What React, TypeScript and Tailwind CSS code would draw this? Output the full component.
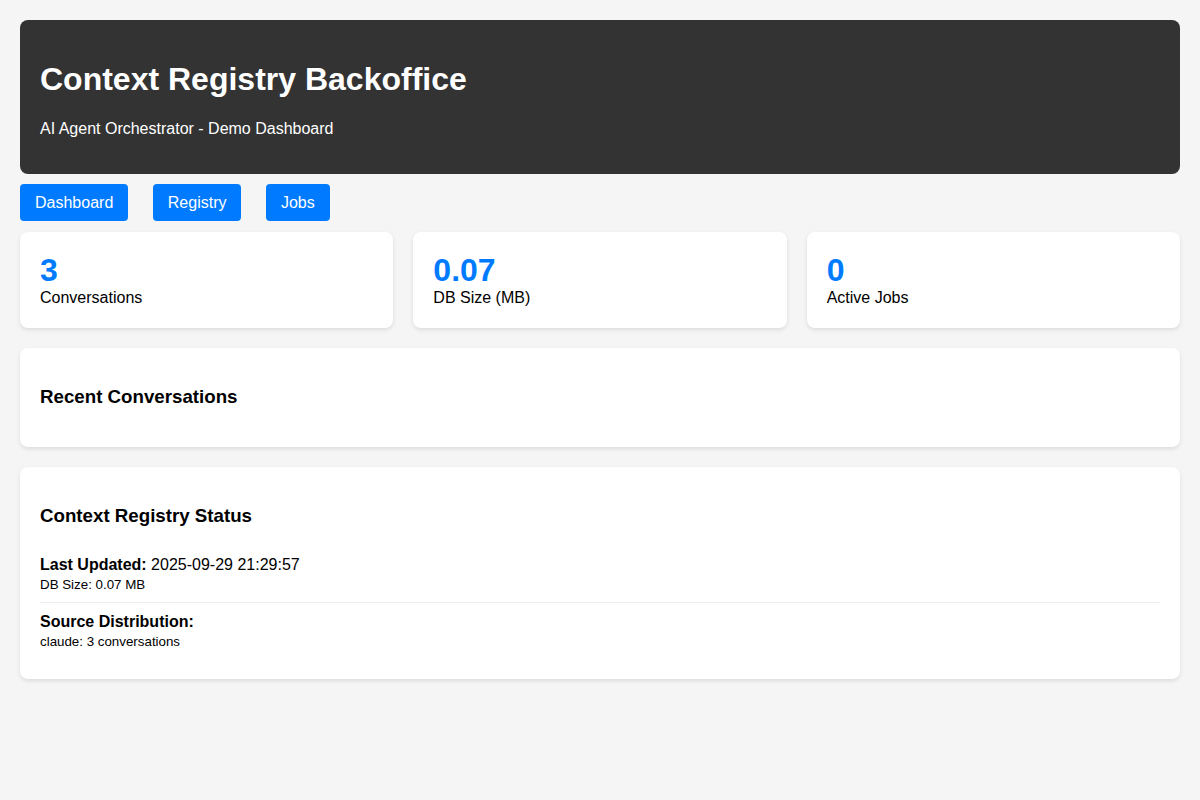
import React from 'react';

const stats = [
  { value: '3', label: 'Conversations' },
  { value: '0.07', label: 'DB Size (MB)' },
  { value: '0', label: 'Active Jobs' },
];

const navItems = ['Dashboard', 'Registry', 'Jobs'];

export default function App() {
  return (
    <div className="min-h-[800px] bg-[#f5f5f5] p-5 font-['Liberation_Sans',Arial,sans-serif] text-black">
      {/* Header */}
      <div className="rounded-lg bg-[#333] p-5 text-white">
        <h1 className="my-[21.44px] text-[32px] leading-[37px] font-bold">Context Registry Backoffice</h1>
        <p className="mb-4 text-base leading-[18.4px]">AI Agent Orchestrator - Demo Dashboard</p>
      </div>

      {/* Nav */}
      <div className="mt-[10px] flex gap-[24.5px]">
        {navItems.map((n) => (
          <button
            key={n}
            className="h-[37px] rounded-[4px] bg-[#007bff] px-[15px] text-base leading-[18px] text-white"
          >
            {n}
          </button>
        ))}
      </div>

      {/* Stats */}
      <div className="mt-[11px] grid grid-cols-3 gap-5">
        {stats.map((s) => (
          <div key={s.label} className="rounded-lg bg-white p-5 shadow-[0_2px_4px_rgba(0,0,0,0.1)]">
            <div className="text-[32px] leading-[37px] font-bold text-[#007bff]">{s.value}</div>
            <div className="text-base leading-[18.4px]">{s.label}</div>
          </div>
        ))}
      </div>

      {/* Recent conversations */}
      <div className="mt-5 rounded-lg bg-white p-5 shadow-[0_2px_4px_rgba(0,0,0,0.1)]">
        <h3 className="my-[18.72px] text-[18.72px] leading-[21.5px] font-bold">Recent Conversations</h3>
      </div>

      {/* Status */}
      <div className="mt-5 rounded-lg bg-white p-5 shadow-[0_2px_4px_rgba(0,0,0,0.1)]">
        <h3 className="my-[18.72px] text-[18.72px] leading-[21.5px] font-bold">Context Registry Status</h3>
        <div className="border-b border-[#eee] py-[10px]">
          <div className="text-base leading-[18.4px]">
            <strong>Last Updated:</strong> 2025-09-29 21:29:57
          </div>
          <div className="mt-[3px] text-[13.33px] leading-[15px]">DB Size: 0.07 MB</div>
        </div>
        <div className="py-[10px]">
          <div className="text-base leading-[18.4px]">
            <strong>Source Distribution:</strong>
          </div>
          <div className="mt-[3px] text-[13.33px] leading-[15px]">claude: 3 conversations</div>
        </div>
      </div>
    </div>
  );
}
